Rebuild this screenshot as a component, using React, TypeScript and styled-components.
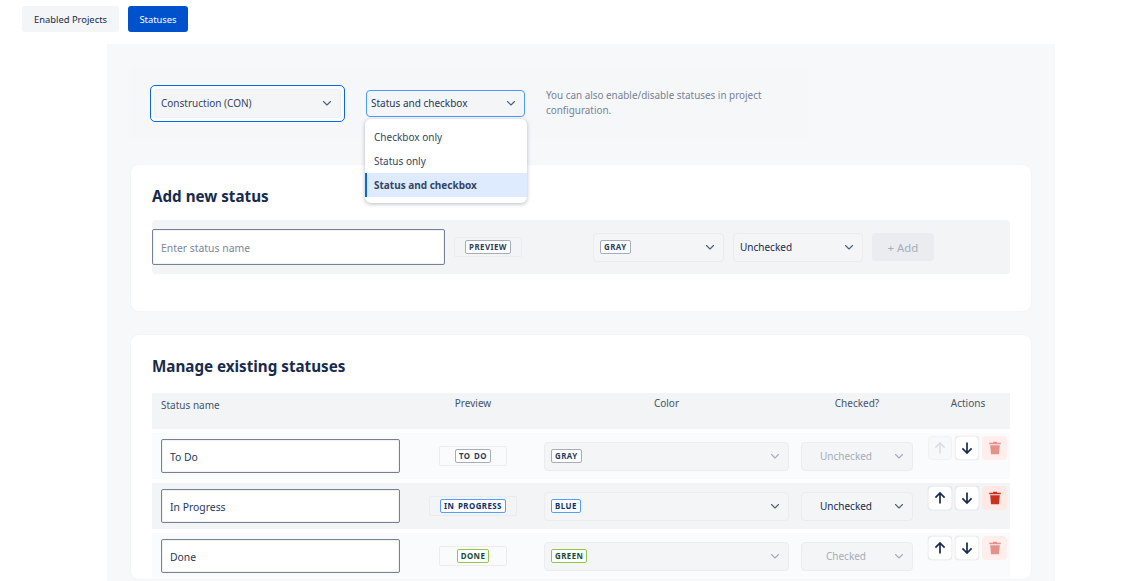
import React from 'react'
import styled, { createGlobalStyle } from 'styled-components'

type Tone = 'gray' | 'blue' | 'green'

const toneBorder: Record<Tone, string> = {
  gray: '#a5adba',
  blue: '#579dff',
  green: '#94c748',
}

const toneText: Record<Tone, string> = {
  gray: '#2c3e5d',
  blue: '#09326c',
  green: '#164b35',
}

const GlobalStyle = createGlobalStyle`
  html, body {
    margin: 0;
    padding: 0;
    background: #fff;
    font-family: "Noto Sans", "Open Sans", sans-serif;
    font-size: 10px;
    color: #172b4d;
  }
  * {
    box-sizing: border-box;
  }
`

const Page = styled.div`
  width: 1122px;
  height: 581px;
  overflow: hidden;
  padding: 6px 0 0;
`

const Tabs = styled.nav`
  display: flex;
  gap: 9px;
  padding-left: 22px;
  margin-bottom: 12px;
`

const Tab = styled.button<{ $active?: boolean }>`
  height: 26px;
  width: ${(p) => (p.$active ? '60px' : '97px')};
  padding: 0;
  border: 0;
  border-radius: 3px;
  font: inherit;
  font-size: 9.4px;
  background: ${(p) => (p.$active ? '#0052cc' : '#f4f5f7')};
  color: ${(p) => (p.$active ? '#fff' : '#172b4d')};
`

const Panel = styled.main`
  width: 948px;
  height: 537px;
  margin-left: 107px;
  padding: 23px 24px 0;
  background: #f7f8f9;
`

const FilterBar = styled.section`
  display: flex;
  align-items: center;
  width: 679px;
  height: 71px;
  padding: 2px 0 0 21px;
  margin-left: -2px;
  margin-bottom: 27px;
  border-radius: 6px;
  background: #f6f7f9;
`

const FocusRing = styled.div`
  width: 195px;
  height: 37px;
  padding: 3px;
  margin-right: 21px;
  border: 1px solid #0c66e4;
  border-radius: 5px;
  background: #fafbfc;
`

const Select = styled.div<{ $disabled?: boolean; $focused?: boolean }>`
  display: flex;
  align-items: center;
  justify-content: space-between;
  height: 100%;
  padding: 0 7px 0 6px;
  border: 1px solid ${(p) => (p.$focused ? '#4c9aff' : '#ebecf0')};
  border-radius: 4px;
  background: #f4f5f7;
  font-size: 10px;
  color: ${(p) => (p.$disabled ? '#a5adba' : '#172b4d')};
  svg {
    flex: none;
    color: ${(p) => (p.$disabled ? '#a5adba' : '#505f79')};
  }
`

const ProjectSelect = styled(Select)`
  padding-bottom: 2px;
  border-color: #eeeff2;
  color: #344563;
`

const ModeSelect = styled(Select)`
  padding-left: 4px;
  padding-bottom: 2px;
  color: #253858;
`

const ModeWrap = styled.div`
  position: relative;
  width: 159px;
  height: 27px;
  margin-right: 21px;
`

const Menu = styled.ul`
  position: absolute;
  z-index: 2;
  top: 29px;
  left: -1px;
  width: 162px;
  margin: 0;
  padding: 6px 0;
  list-style: none;
  border-radius: 6px;
  background: #fff;
  box-shadow: 0 1px 4px rgba(9, 30, 66, 0.3);
`

const MenuItem = styled.li<{ $selected?: boolean }>`
  height: 24px;
  line-height: 24px;
  padding-left: ${(p) => (p.$selected ? '7px' : '9px')};
  font-size: 10px;
  font-weight: ${(p) => (p.$selected ? 700 : 400)};
  color: #344563;
  background: ${(p) => (p.$selected ? '#deebff' : 'transparent')};
  border-left: ${(p) => (p.$selected ? '2px solid #0c66e4' : '0')};
`

const Help = styled.p`
  width: 240px;
  margin: -1px 0 0;
  font-size: 9.9px;
  line-height: 15px;
  color: #758195;
`

const Card = styled.section`
  width: 900px;
  margin-bottom: 24px;
  padding: 21px 21px 0;
  border-radius: 8px;
  background: #fff;
  box-shadow: 0 0 2px rgba(9, 30, 66, 0.06);
`

const AddCard = styled(Card)`
  height: 146px;
`

const CardTitle = styled.h2`
  margin: 0;
  height: 20px;
  font-size: 15.2px;
  line-height: 20px;
  font-weight: 700;
  color: #172b4d;
`

const AddRow = styled.div`
  display: flex;
  align-items: center;
  height: 54px;
  margin-top: 14px;
  border-radius: 4px;
  background: #f3f4f6;
`

const NameInput = styled.div<{ $placeholder?: boolean }>`
  display: flex;
  align-items: center;
  height: 100%;
  padding: 2px 0 0 8px;
  border: 1px solid #758195;
  border-radius: 2px;
  background: #fff;
  box-shadow: inset 0 0 0 1px #f1f2f4;
  font-size: 10.4px;
  color: ${(p) => (p.$placeholder ? '#7a869a' : '#253858')};
`

const AddName = styled(NameInput)`
  width: 293px;
  height: 36px;
  margin-right: 9px;
`

const PreviewBox = styled.div`
  display: inline-flex;
  align-items: center;
  justify-content: center;
  min-width: 68px;
  height: 20px;
  padding: 0 10px;
  border: 1px solid #ebecf0;
  border-radius: 2px;
`

const AddPreview = styled(PreviewBox)`
  margin-right: 71px;
`

const Lozenge = styled.span<{ $tone: Tone }>`
  display: inline-block;
  height: 14px;
  padding: 0 3px;
  border: 1px solid ${(p) => toneBorder[p.$tone]};
  border-radius: 2px;
  background: #fff;
  font-size: 7.9px;
  line-height: 12px;
  font-weight: 700;
  letter-spacing: 0.45px;
  word-spacing: 1px;
  text-transform: uppercase;
  white-space: nowrap;
  color: ${(p) => toneText[p.$tone]};
`

const AddColor = styled(Select)`
  width: 131px;
  height: 29px;
  margin-right: 9px;
`

const AddChecked = styled(Select)`
  width: 130px;
  height: 29px;
  margin-right: 9px;
`

const AddButton = styled.button`
  width: 62px;
  height: 28px;
  border: 0;
  border-radius: 4px;
  background: #ebecf0;
  font: inherit;
  font-size: 11.4px;
  color: #a5adba;
`

const TableTitle = styled(CardTitle)`
  margin-bottom: 17px;
`

const gridColumns = '257px 128px 259px 122px 92px'

const TableHead = styled.div`
  display: grid;
  grid-template-columns: ${gridColumns};
  height: 36px;
  margin-bottom: 4px;
  background: #f3f4f6;
  font-size: 10px;
  color: #44546f;
`

const HeadCell = styled.div<{ $name?: boolean }>`
  padding-top: ${(p) => (p.$name ? '5px' : '3px')};
  padding-left: ${(p) => (p.$name ? '9px' : '0')};
  text-align: ${(p) => (p.$name ? 'left' : 'center')};
  line-height: 15px;
`

const ActionsHead = styled(HeadCell)`
  padding-left: 8px;
`

const Row = styled.div<{ $shaded?: boolean }>`
  display: grid;
  grid-template-columns: ${gridColumns};
  align-items: center;
  height: 46px;
  margin-bottom: 4px;
  background: ${(p) => (p.$shaded ? '#f3f4f6' : '#fafbfc')};
`

const RowName = styled(NameInput)`
  width: 239px;
  height: 34px;
  margin-left: 9px;
`

const PreviewCell = styled.div`
  display: flex;
  justify-content: center;
`

const ColorCell = styled.div`
  height: 29px;
  padding: 0 7px;
`

const CheckedCell = styled.div`
  height: 29px;
  padding: 0 5px;
`

const CheckedLabel = styled.span`
  flex: 1;
  margin-right: 9px;
  text-align: center;
`

const Actions = styled.div`
  display: flex;
  gap: 3px;
  align-self: start;
  padding: 3px 0 0 10px;
`

const IconButton = styled.button<{ $muted?: boolean }>`
  display: flex;
  align-items: center;
  justify-content: center;
  width: 24px;
  height: 24px;
  padding: 0;
  border: 1px solid #f1f2f4;
  border-radius: 4px;
  background: ${(p) => (p.$muted ? '#f7f8f9' : '#fff')};
  color: ${(p) => (p.$muted ? '#dcdfe4' : '#172b4d')};
  box-shadow: ${(p) => (p.$muted ? 'none' : '0 0 1px rgba(9, 30, 66, 0.2)')};
`

const DeleteButton = styled(IconButton)<{ $disabled?: boolean }>`
  width: 25px;
  border: 0;
  box-shadow: none;
  background: ${(p) => (p.$disabled ? '#ffeeeb' : '#ffe9e5')};
  color: ${(p) => (p.$disabled ? '#e2928a' : '#c9321f')};
`

const Chevron = () => (
  <svg width="12" height="12" viewBox="0 0 12 12" fill="none">
    <path d="M2.5 4.5 6 8l3.5-3.5" stroke="currentColor" strokeWidth="1.1" strokeLinecap="round" strokeLinejoin="round" />
  </svg>
)

const ArrowUp = () => (
  <svg width="14" height="14" viewBox="0 0 14 14" fill="none">
    <path d="M7 12.5V2M2.4 6.6 7 2l4.6 4.6" stroke="currentColor" strokeWidth="1.7" />
  </svg>
)

const ArrowDown = () => (
  <svg width="14" height="14" viewBox="0 0 14 14" fill="none">
    <path d="M7 1.5V12M2.4 7.4 7 12l4.6-4.6" stroke="currentColor" strokeWidth="1.7" />
  </svg>
)

const Trash = () => (
  <svg width="14" height="14" viewBox="0 0 14 14" fill="currentColor">
    <path d="M5 0.8h4v1h3.8v1.5H1.2V1.8H5zM2.2 4.2h9.6l-.8 9H3z" />
  </svg>
)

const statuses = [
  { name: 'To Do', tone: 'gray' as Tone, checked: 'Unchecked', locked: true, first: true },
  { name: 'In Progress', tone: 'blue' as Tone, checked: 'Unchecked', locked: false, first: false },
  { name: 'Done', tone: 'green' as Tone, checked: 'Checked', locked: true, first: false },
]

export default function App() {
  return (
    <Page>
      <GlobalStyle />
      <Tabs>
        <Tab>Enabled Projects</Tab>
        <Tab $active>Statuses</Tab>
      </Tabs>
      <Panel>
        <FilterBar>
          <FocusRing>
            <ProjectSelect>
              Construction (CON)
              <Chevron />
            </ProjectSelect>
          </FocusRing>
          <ModeWrap>
            <ModeSelect $focused>
              Status and checkbox
              <Chevron />
            </ModeSelect>
            <Menu>
              <MenuItem>Checkbox only</MenuItem>
              <MenuItem>Status only</MenuItem>
              <MenuItem $selected>Status and checkbox</MenuItem>
            </Menu>
          </ModeWrap>
          <Help>You can also enable/disable statuses in project configuration.</Help>
        </FilterBar>

        <AddCard>
          <CardTitle>Add new status</CardTitle>
          <AddRow>
            <AddName $placeholder>Enter status name</AddName>
            <AddPreview>
              <Lozenge $tone="gray">Preview</Lozenge>
            </AddPreview>
            <AddColor>
              <Lozenge $tone="gray">Gray</Lozenge>
              <Chevron />
            </AddColor>
            <AddChecked>
              Unchecked
              <Chevron />
            </AddChecked>
            <AddButton>+ Add</AddButton>
          </AddRow>
        </AddCard>

        <Card>
          <TableTitle>Manage existing statuses</TableTitle>
          <TableHead>
            <HeadCell $name>Status name</HeadCell>
            <HeadCell>Preview</HeadCell>
            <HeadCell>Color</HeadCell>
            <HeadCell>Checked?</HeadCell>
            <ActionsHead>Actions</ActionsHead>
          </TableHead>
          {statuses.map((s, i) => (
            <Row key={s.name} $shaded={i % 2 === 1}>
              <RowName>{s.name}</RowName>
              <PreviewCell>
                <PreviewBox>
                  <Lozenge $tone={s.tone}>{s.name}</Lozenge>
                </PreviewBox>
              </PreviewCell>
              <ColorCell>
                <Select $disabled={s.locked}>
                  <Lozenge $tone={s.tone}>{s.tone}</Lozenge>
                  <Chevron />
                </Select>
              </ColorCell>
              <CheckedCell>
                <Select $disabled={s.locked}>
                  <CheckedLabel>{s.checked}</CheckedLabel>
                  <Chevron />
                </Select>
              </CheckedCell>
              <Actions>
                <IconButton $muted={s.first}>
                  <ArrowUp />
                </IconButton>
                <IconButton>
                  <ArrowDown />
                </IconButton>
                <DeleteButton $disabled={s.locked}>
                  <Trash />
                </DeleteButton>
              </Actions>
            </Row>
          ))}
        </Card>
      </Panel>
    </Page>
  )
}
